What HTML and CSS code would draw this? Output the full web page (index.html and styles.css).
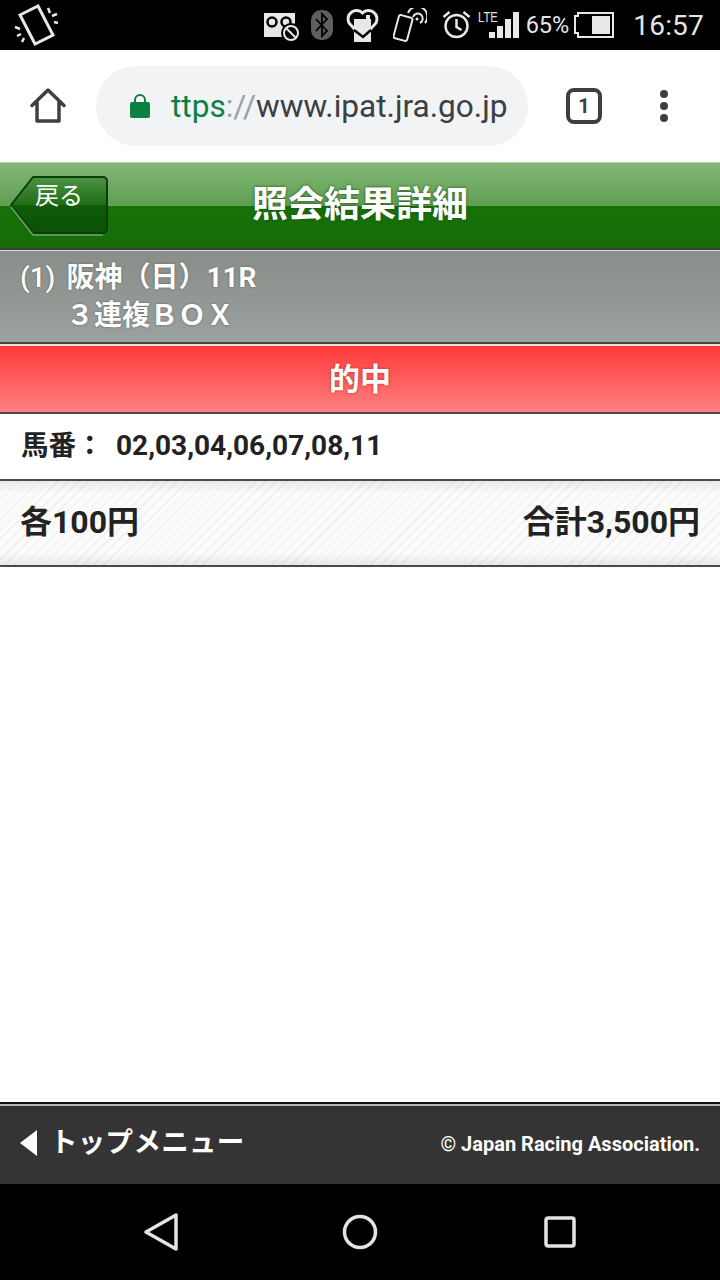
FILE: index.html
```html
<!DOCTYPE html>
<html lang="ja">
<head>
    <meta charset="UTF-8">
    <meta name="viewport" content="width=device-width, initial-scale=1.0">
    <title>照会結果詳細</title>
    <link rel="stylesheet" href="styles.css">
</head>
<body>
    <div id="screen">
        <div class="status-bar">
            <svg class="rotate-icon" width="46" height="46" viewBox="14 2 46 46">
                <path d="M20 15L38 6l15 29-18 9z" fill="none" stroke="#e8e8e8" stroke-width="3"/>
                <path d="M48 8l2 5M52 16l5-2M54 22l4 1" stroke="#e8e8e8" stroke-width="2.500" fill="none"/>
                <path d="M15 27l5 2M17 36l4-2M22 42l2-4" stroke="#e8e8e8" stroke-width="2.500" fill="none"/>
            </svg>
            <div class="status-icons">
                <svg class="record-icon" width="36" height="30" viewBox="0 0 36 30">
                    <path d="M0 0h31v24H0z" fill="#e8e8e8"/>
                    <circle cx="8" cy="9" r="4.500" fill="none" stroke="#000" stroke-width="2.500"/>
                    <circle cx="22" cy="9" r="4.500" fill="none" stroke="#000" stroke-width="2.500"/>
                    <path d="M14 24h3v6h-3z" fill="#000"/>
                    <circle cx="27" cy="20" r="10" fill="#000"/>
                    <circle cx="27" cy="20" r="7" fill="none" stroke="#e8e8e8" stroke-width="2"/>
                    <path d="M22.500 15.500l9 9" stroke="#e8e8e8" stroke-width="2"/>
                </svg>
                <svg width="22" height="30" viewBox="0 0 22 30">
                    <rect width="22" height="30" rx="10" fill="#5f5f5f"/>
                    <path d="M5 9l11 12-5 5V4l5 5L5 21" fill="none" stroke="#000" stroke-width="1.800"/>
                </svg>
                <svg width="36" height="36" viewBox="0 0 36 36">
                    <path d="M17.500 31L4 16a8.500 8.500 0 0 1 13.500-10 8.500 8.500 0 0 1 13.500 10z" fill="none" stroke="#e8e8e8" stroke-width="3"/>
                    <path d="M9 12h12V8h4v4h1v23H9z" fill="#e8e8e8"/>
                    <path d="M9 23l9 7 8-7" fill="none" stroke="#000" stroke-width="2.500"/>
                </svg>
                <svg width="34" height="34" viewBox="0 0 34 34">
                    <path d="M15 5a10 10 0 1 1 17 10" fill="none" stroke="#e8e8e8" stroke-width="2"/>
                    <path d="M20 9a5 5 0 1 1 7 6" fill="none" stroke="#e8e8e8" stroke-width="2"/>
                    <circle cx="24" cy="11" r="1.500" fill="#e8e8e8"/>
                    <rect x="3" y="8" width="14" height="24" rx="2" transform="rotate(15 10 20)" fill="#000" stroke="#e8e8e8" stroke-width="2"/>
                </svg>
                <svg class="alarm-icon" width="29" height="28" viewBox="0 0 29 28">
                    <circle cx="14.500" cy="15" r="11" fill="none" stroke="#e8e8e8" stroke-width="2.500"/>
                    <path d="M14.500 8v8l5 3M1.500 6l6-5M27.500 6l-6-5" fill="none" stroke="#e8e8e8" stroke-width="2.500"/>
                </svg>
                <div class="signal">
                    <span class="lte">LTE</span>
                    <svg width="30" height="26" viewBox="0 0 30 26">
                        <rect x="0" y="20" width="6" height="6" fill="#e8e8e8"/>
                        <rect x="8" y="14" width="6" height="12" fill="#e8e8e8"/>
                        <rect x="16" y="7" width="6" height="19" fill="#e8e8e8"/>
                        <rect x="24" y="0" width="6" height="26" fill="#e8e8e8"/>
                    </svg>
                </div>
                <span class="battery-text">65%</span>
                <svg class="battery-icon" width="40" height="26" viewBox="0 0 40 26">
                    <path d="M4 4V1h35v24H4v-4H1V4z" fill="none" stroke="#e8e8e8" stroke-width="2"/>
                    <rect x="18" y="4" width="18" height="18" fill="#e8e8e8"/>
                </svg>
            </div>
            <span class="clock">16:57</span>
        </div>

        <div class="toolbar">
            <svg class="home-icon" width="38" height="38" viewBox="0 0 38 38">
                <path d="M3 18.500L19 3l16 15.500M8 15v19h22V15" fill="none" stroke="#3c4043" stroke-width="3.500" stroke-linejoin="round" stroke-linecap="round"/>
            </svg>
            <div class="omnibox">
                <svg width="20" height="26" viewBox="0 0 20 26">
                    <path d="M5 11V7a5 5 0 0 1 10 0v4" fill="none" stroke="#0b8043" stroke-width="2"/>
                    <rect x="0" y="9" width="20" height="16" rx="2" fill="#0b8043"/>
                </svg>
                <div class="url"><span class="scheme">ttps</span><span class="sep">://</span>www.ipat.jra.go.jp</div>
            </div>
            <div class="tab-count">1</div>
            <div class="menu-dots"><i></i><i></i><i></i></div>
        </div>

        <div class="page-header">
            <a class="back-btn">
                <svg class="back-shape" width="100" height="62" viewBox="0 0 100 62">
                    <defs>
                        <linearGradient id="backFill" x1="0" y1="0" x2="0" y2="1">
                            <stop offset="0" stop-color="#4d9243"/>
                            <stop offset="0.5" stop-color="#1f6d16"/>
                            <stop offset="0.5" stop-color="#0f5c08"/>
                            <stop offset="1" stop-color="#0c5005"/>
                        </linearGradient>
                    </defs>
                    <path d="M1 30L23 2H93a4 4 0 0 1 4 4V54a4 4 0 0 1-4 4H23z" fill="url(#backFill)" stroke="#0b3d06" stroke-width="2" stroke-linejoin="round"/>
                    <path d="M1 32L23 60H93" fill="none" stroke="#6fa565" stroke-width="1.500"/>
                </svg>
                <span class="back-label">戻る</span>
            </a>
            <h1>照会結果詳細</h1>
        </div>

        <div class="race-info">
            <div class="race-line"><span class="race-num">(1)</span>阪神（日）11R</div>
            <div class="race-line race-type">３連複ＢＯＸ</div>
        </div>

        <div class="result-bar">的中</div>

        <div class="numbers-row">
            <span class="numbers-label">馬番：</span>
            <span class="numbers">02,03,04,06,07,08,11</span>
        </div>

        <div class="amount-row">
            <span>各100円</span>
            <span>合計3,500円</span>
        </div>

        <div class="spacer"></div>

        <div class="page-footer">
            <div class="top-menu"><span class="arrow-left"></span>トップメニュー</div>
            <div class="copyright">© Japan Racing Association.</div>
        </div>

        <div class="nav-bar">
            <svg class="nav-back" width="36" height="38" viewBox="0 0 36 38">
                <path d="M3 19L33 2v34z" fill="none" stroke="#e4e4e4" stroke-width="3.500" stroke-linejoin="round"/>
            </svg>
            <svg width="36" height="36" viewBox="0 0 36 36">
                <circle cx="18" cy="18" r="15.500" fill="none" stroke="#e4e4e4" stroke-width="3.500"/>
            </svg>
            <svg width="32" height="32" viewBox="0 0 32 32">
                <rect x="2" y="2" width="28" height="28" rx="2" fill="none" stroke="#e4e4e4" stroke-width="3.500"/>
            </svg>
        </div>
    </div>
</body>
</html>
```

FILE: styles.css
```css
body, html {
    margin: 0;
    padding: 0;
    background: #fff;
    font-family: Roboto, "Noto Sans CJK JP", sans-serif;
}
#screen {
    display: flex;
    flex-direction: column;
    width: 720px;
    height: 1280px;
    overflow: hidden;
}

/* android status bar */
.status-bar {
    display: flex;
    align-items: center;
    height: 50px;
    flex: none;
    background: #000;
    color: #e4e4e4;
    padding: 0 16px 0 14px;
    box-sizing: border-box;
}
.status-icons {
    display: flex;
    align-items: center;
    gap: 12px;
    margin-left: auto;
}
.record-icon {
    margin-top: 5px;
    margin-right: -1px;
}
.alarm-icon {
    margin-left: 3px;
}
.signal {
    position: relative;
    display: flex;
    align-items: flex-end;
    margin-left: -5px;
    padding-left: 11px;
}
.lte {
    position: absolute;
    left: 0;
    top: -3px;
    font-size: 15px;
    font-weight: 500;
    line-height: 16px;
    font-family: "Liberation Sans", sans-serif;
    transform: scaleX(0.75);
    transform-origin: left;
}
.battery-text {
    margin-left: -5px;
    font-size: 23.500px;
}
.battery-icon {
    margin-left: -7px;
}
.clock {
    font-size: 28px;
    margin-left: 19px;
    letter-spacing: 0.2px;
}

/* browser toolbar */
.toolbar {
    display: flex;
    align-items: center;
    height: 112px;
    flex: none;
    background: #fff;
    box-sizing: border-box;
    padding-left: 29px;
}
.omnibox {
    display: flex;
    align-items: center;
    gap: 21px;
    width: 432px;
    height: 80px;
    margin-left: 29px;
    padding-left: 34px;
    box-sizing: border-box;
    border-radius: 40px;
    background: #f1f3f4;
    overflow: hidden;
}
.url {
    font-size: 31.600px;
    color: #3c4043;
    white-space: nowrap;
}
.scheme {
    color: #0b8043;
}
.sep {
    color: #9aa0a6;
}
.tab-count {
    width: 36px;
    height: 36px;
    margin-left: 38px;
    box-sizing: border-box;
    border: 4px solid #3c4043;
    border-radius: 8px;
    font-size: 20px;
    font-weight: 700;
    line-height: 28px;
    text-align: center;
    color: #3c4043;
}
.menu-dots {
    display: flex;
    flex-direction: column;
    gap: 4px;
    margin-left: 58px;
}
.menu-dots i {
    display: block;
    width: 8px;
    height: 8px;
    border-radius: 50%;
    background: #3c4043;
}

/* page header */
.page-header {
    position: relative;
    display: flex;
    align-items: center;
    justify-content: center;
    height: 88px;
    flex: none;
    box-sizing: border-box;
    border-top: 1px solid #b7ccb0;
    border-bottom: 2px solid #3c3c3c;
    background: linear-gradient(to bottom, #82b877 0%, #5f9f52 50%, #167206 50%, #166c08 100%);
}
.page-header h1 {
    margin: 0 0 2px;
    font-size: 36px;
    font-weight: 700;
    line-height: 40px;
    color: #fff;
    text-shadow: 0 0 3px #1a4a12;
}
.back-btn {
    position: absolute;
    left: 10px;
    top: 12px;
    width: 100px;
    height: 62px;
}
.back-shape {
    display: block;
}
.back-label {
    position: absolute;
    left: 25px;
    top: 4px;
    font-size: 24px;
    line-height: 34px;
    color: #fff;
}

/* race info */
.race-info {
    height: 94px;
    flex: none;
    box-sizing: border-box;
    padding: 8px 20px 0;
    border-top: 1px solid #d8dcd8;
    border-bottom: 2px solid #444;
    background: linear-gradient(to bottom, #8a8e8b, #9aa19e);
    color: #fff;
    font-size: 28px;
    font-weight: 700;
    line-height: 38px;
    text-shadow: 0 0 2px #555;
}
.race-num {
    margin-right: 11px;
    font-weight: 500;
}
.race-type {
    padding-left: 46px;
}

/* result */
.result-bar {
    height: 70px;
    flex: none;
    box-sizing: border-box;
    border-top: 2px solid #f4dede;
    border-bottom: 2px solid #4a4a4a;
    background: linear-gradient(to bottom, #ff3a3a, #ff8080);
    color: #fff;
    font-size: 31px;
    font-weight: 700;
    line-height: 68px;
    text-align: center;
    text-shadow: 0 0 3px #a33;
}
.numbers-row {
    display: flex;
    align-items: center;
    height: 67px;
    flex: none;
    box-sizing: border-box;
    padding: 0 20px 2px 21px;
    border-bottom: 2px solid #4a4a4a;
    background: #fff;
    color: #222;
    font-size: 28px;
    font-weight: 700;
}
.numbers-label {
    width: 95px;
    flex: none;
    margin-bottom: 6px;
    font-size: 27.500px;
    white-space: nowrap;
}
.amount-row {
    display: flex;
    align-items: center;
    justify-content: space-between;
    height: 86px;
    flex: none;
    box-sizing: border-box;
    padding: 0 20px 8px;
    border-bottom: 2px solid #4a4a4a;
    background:
        linear-gradient(to bottom, rgba(0, 0, 0, 0.07), rgba(0, 0, 0, 0) 12px, rgba(0, 0, 0, 0) 72px, rgba(0, 0, 0, 0.07)),
        repeating-linear-gradient(135deg, #fbfbfb 0, #fbfbfb 6px, #eeeeee 6px, #eeeeee 7px);
    color: #222;
    font-size: 32px;
    font-weight: 700;
}
.spacer {
    flex: 1;
    background: #fff;
}

/* page footer */
.page-footer {
    display: flex;
    align-items: center;
    justify-content: space-between;
    height: 82px;
    flex: none;
    box-sizing: border-box;
    padding: 0 20px 2px;
    border-top: 2px solid #111;
    box-shadow: inset 0 2px 0 #b4b4b4;
    background: #343434;
    color: #fff;
}
.top-menu {
    display: flex;
    align-items: center;
    font-size: 27.500px;
    font-weight: 700;
    line-height: 40px;
    letter-spacing: 0.3px;
}
.arrow-left {
    width: 0;
    height: 0;
    margin-right: 13px;
    border-top: 13px solid transparent;
    border-bottom: 13px solid transparent;
    border-right: 17px solid #fff;
}
.copyright {
    margin-top: 2px;
    font-size: 20px;
    font-weight: 700;
}

/* android nav bar */
.nav-bar {
    display: flex;
    align-items: center;
    justify-content: center;
    gap: 166px;
    height: 96px;
    flex: none;
    padding-right: 4px;
    background: #000;
}
.nav-back {
    margin-left: 3px;
    margin-right: -3px;
}
```
